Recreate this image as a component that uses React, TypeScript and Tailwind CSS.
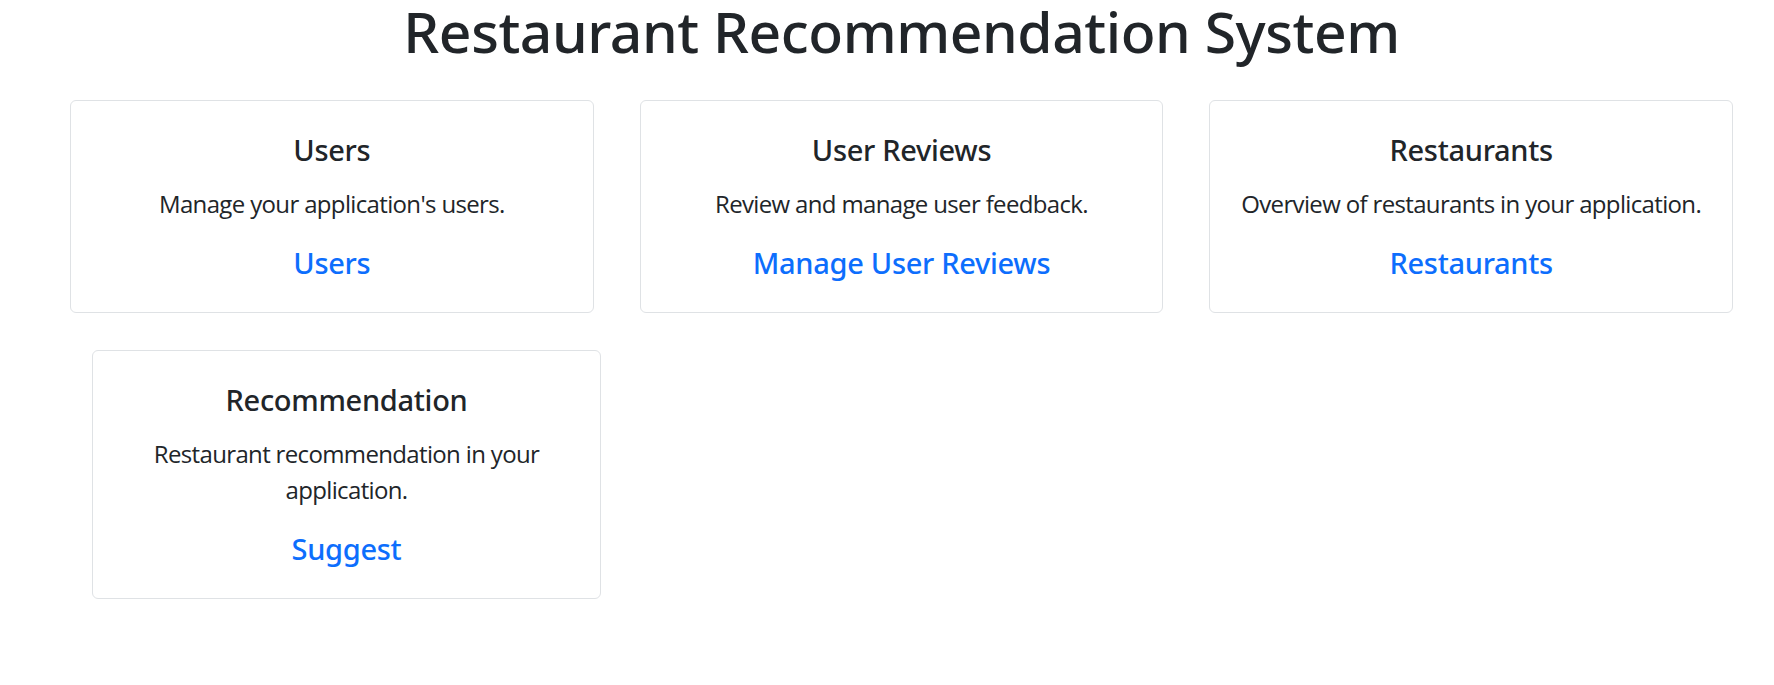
const cards = [
  {
    title: 'Users',
    text: "Manage your application's users.",
    link: 'Users',
  },
  {
    title: 'User Reviews',
    text: 'Review and manage user feedback.',
    link: 'Manage User Reviews',
  },
  {
    title: 'Restaurants',
    text: 'Overview of restaurants in your application.',
    link: 'Restaurants',
  },
];

type TCard = { title: string; text: string; link: string };

const heading = { fontFamily: '"Noto Sans", "Open Sans", sans-serif' };

const Card = ({ card, className = '' }: { card: TCard; className?: string }) => (
  <div
    className={`rounded-[6px] border border-[#dfe2e5] bg-white pt-[31px] pb-[32px] text-center ${className}`}
  >
    <h3
      className="mb-[19px] text-[29px] leading-[35px] font-medium tracking-[-0.3px] text-[#212529]"
      style={heading}
    >
      {card.title}
    </h3>
    <p className="mb-[23px] text-[24px] leading-[36px] tracking-[-0.65px] text-[#212529]">{card.text}</p>
    <a
      href="#"
      className="block text-[29px] leading-[35px] font-medium tracking-[-0.3px] text-[#0d6efd]"
      style={heading}
    >
      {card.link}
    </a>
  </div>
);

export default function App() {
  return (
    <div
      className="min-h-[685px] bg-white pl-[70px] pr-[41px]"
      style={{ fontFamily: '"Open Sans", "Noto Sans", sans-serif' }}
    >
      <h1
        className="pt-px text-center text-[57px] leading-[60px] font-medium tracking-[-0.45px] text-[#212529]"
        style={heading}
      >
        Restaurant Recommendation System
      </h1>
      <div className="mt-[39px] grid grid-cols-3 gap-[46px]">
        {cards.map((card) => (
          <Card key={card.title} card={card} className="px-[20px]" />
        ))}
      </div>
      <div className="mt-[37px] flex">
        <Card
          className="ml-[22px] w-[509px] px-[60px]"
          card={{
            title: 'Recommendation',
            text: 'Restaurant recommendation in your application.',
            link: 'Suggest',
          }}
        />
      </div>
    </div>
  );
}
